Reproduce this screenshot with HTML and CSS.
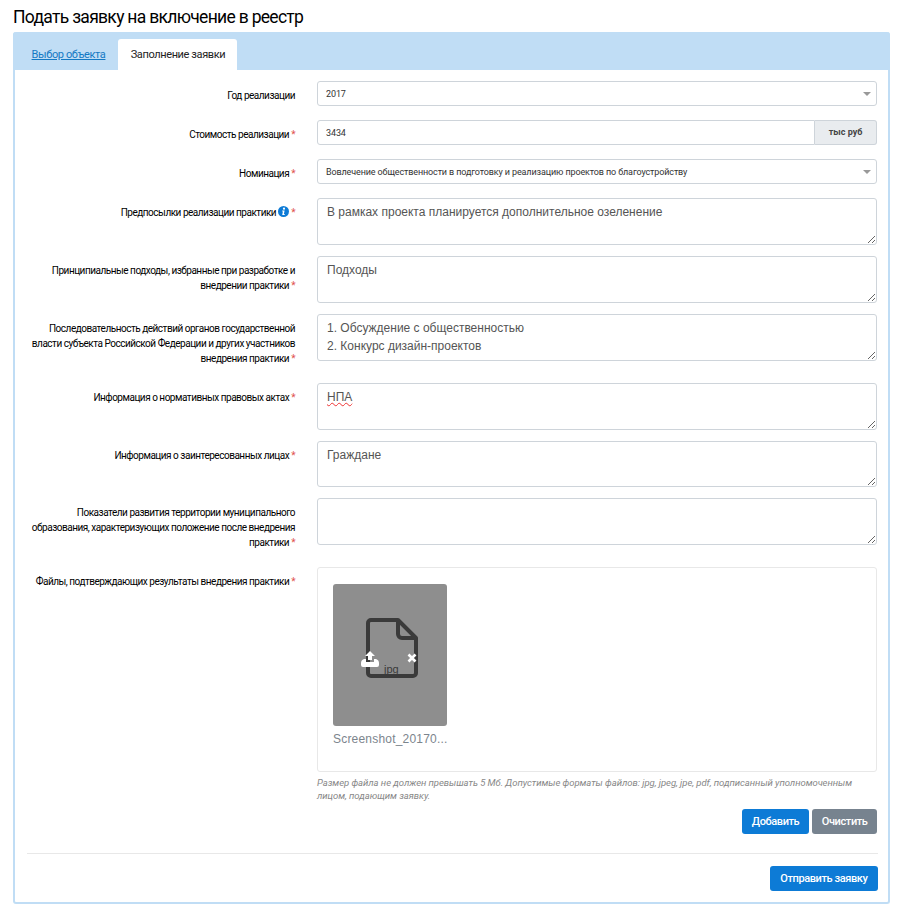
FILE: index.html
```html
<!doctype html>
<html lang="ru">
  <head>
    <meta charset="utf-8">
    <meta name="viewport" content="width=device-width, initial-scale=1">
    <title>Подать заявку на включение в реестр</title>
    <link rel="stylesheet" href="styles.css">
  </head>
  <body>
    <h1>Подать заявку на включение в реестр</h1>
    <div class="panel">
      <div class="tabs">
        <a class="tab" href="#">Выбор объекта</a>
        <span class="tab active">Заполнение заявки</span>
      </div>
      <form class="panel-body">
        <div class="row">
          <label class="row-label">Год реализации</label>
          <div class="row-field select-wrap">
            <select class="control"><option>2017</option></select>
          </div>
        </div>
        <div class="row">
          <label class="row-label">Стоимость реализации <span class="req">*</span></label>
          <div class="row-field input-group">
            <input class="control" type="text" value="3434">
            <span class="addon">тыс руб</span>
          </div>
        </div>
        <div class="row">
          <label class="row-label">Номинация <span class="req">*</span></label>
          <div class="row-field select-wrap">
            <select class="control"><option>Вовлечение общественности в подготовку и реализацию проектов по благоустройству</option></select>
          </div>
        </div>
        <div class="row">
          <label class="row-label">Предпосылки реализации практики
            <svg class="info" width="11" height="11" viewBox="0 0 11 11"><circle cx="5.5" cy="5.5" r="5.5" fill="#0d7bd6"/><circle cx="6" cy="2.7" r="1.1" fill="#fff"/><path d="M4.2 4.6h2.4L5.9 8.1h.8v.8H4.2l.7-3.5h-.7z" fill="#fff"/></svg>
            <span class="req">*</span></label>
          <div class="row-field"><textarea class="control" spellcheck="false">В рамках проекта планируется дополнительное озеленение</textarea></div>
        </div>
        <div class="row">
          <label class="row-label">Принципиальные подходы, избранные при разработке и внедрении практики <span class="req">*</span></label>
          <div class="row-field"><textarea class="control" spellcheck="false">Подходы</textarea></div>
        </div>
        <div class="row">
          <label class="row-label">Последовательность действий органов государственной власти субъекта Российской Федерации и других участников внедрения практики <span class="req">*</span></label>
          <div class="row-field"><textarea class="control" spellcheck="false">1. Обсуждение с общественностью
2. Конкурс дизайн-проектов</textarea></div>
        </div>
        <div class="row">
          <label class="row-label">Информация о нормативных правовых актах <span class="req">*</span></label>
          <div class="row-field"><textarea class="control misspelled" spellcheck="false">НПА</textarea></div>
        </div>
        <div class="row">
          <label class="row-label">Информация о заинтересованных лицах <span class="req">*</span></label>
          <div class="row-field"><textarea class="control control-short" spellcheck="false">Граждане</textarea></div>
        </div>
        <div class="row">
          <label class="row-label">Показатели развития территории муниципального образования, характеризующих положение после внедрения практики <span class="req">*</span></label>
          <div class="row-field"><textarea class="control" spellcheck="false"></textarea></div>
        </div>
        <div class="row row-files">
          <label class="row-label">Файлы, подтверждающих результаты внедрения практики <span class="req">*</span></label>
          <div class="row-field">
            <div class="file-box">
              <div class="file-item">
                <div class="file-thumb">
                  <svg class="file-icon" width="52" height="60" viewBox="0 0 52 60" fill="none" stroke="#3a3a3a" stroke-width="4" stroke-linejoin="round"><path d="M5 2h27l18 18v35a3 3 0 0 1-3 3H5a3 3 0 0 1-3-3V5a3 3 0 0 1 3-3z"/><path d="M32 2v14a4 4 0 0 0 4 4h14"/></svg>
                  <svg class="upload-icon" width="18" height="17" viewBox="0 0 18 17"><path fill="#fff" d="M9 1l5 5h-3v4H7V6H4z"/><path fill="#fff" d="M0 13q0-3 3-4h2v3h8V9h2q3 1 3 4v2q0 2-2 2H2q-2 0-2-2z"/></svg>
                  <svg class="remove-icon" width="10" height="10" viewBox="0 0 10 10"><path d="M1.5 1.5l7 7M8.5 1.5l-7 7" stroke="#fff" stroke-width="2.6"/></svg>
                  <span class="file-ext">jpg</span>
                </div>
                <div class="file-name">Screenshot_20170...</div>
              </div>
            </div>
            <p class="hint">Размер файла не должен превышать 5 Мб. Допустимые форматы файлов: jpg, jpeg, jpe, pdf, подписанный уполномоченным лицом, подающим заявку.</p>
            <div class="file-actions">
              <button type="button" class="btn btn-blue">Добавить</button>
              <button type="button" class="btn btn-gray">Очистить</button>
            </div>
          </div>
        </div>
        <div class="form-footer">
          <button type="button" class="btn btn-blue btn-send">Отправить заявку</button>
        </div>
      </form>
    </div>
  </body>
</html>
```
FILE: styles.css
```css
body {
  font-family: Roboto, "Liberation Sans", sans-serif;
  margin: 0;
  padding: 0;
  background-color: #fff;
  color: #111;
}

h1 {
  font-size: 17.5px;
  font-weight: 400;
  letter-spacing: -0.7px;
  line-height: 21px;
  margin: 7px 0 4px 13px;
  color: #000;
}

a {
  color: #1479c4;
}

.panel {
  margin: 0 13px;
  border: 2px solid #c0ddf5;
  border-top: 0;
  border-radius: 3px;
  background: #fff;
}

.tabs {
  display: flex;
  background: #c0ddf5;
  height: 38px;
  padding: 7px 0 0 5px;
  margin: 0 -2px;
  box-sizing: border-box;
  border-radius: 3px 3px 0 0;
}

.tab {
  box-sizing: border-box;
  width: 100px;
  padding: 9px 0 0 1px;
  font-size: 11px;
  letter-spacing: -0.38px;
  line-height: 14px;
  text-align: center;
}

.tab.active {
  width: 119px;
  background: #fff;
  color: #222;
  border-radius: 3px 3px 0 0;
}

.panel-body {
  padding: 11px 11px 11px 12px;
}

.row {
  display: flex;
  margin-bottom: 11px;
}

.row-files {
  margin-bottom: 19px;
}

.row-label {
  width: 268px;
  padding: 7px 0 6px;
  flex: none;
  text-align: right;
  font-size: 10px;
  letter-spacing: -0.48px;
  line-height: 15px;
  color: #000;
}

.req {
  color: #e0524d;
}

.info {
  vertical-align: -1px;
}

.row-field {
  flex: 1;
  margin-left: 22px;
  min-width: 0;
}

.control {
  display: block;
  width: 100%;
  height: 25px;
  box-sizing: border-box;
  border: 1px solid #ced4da;
  border-radius: 3px;
  background: #fff;
  padding: 0 8px;
  font-family: Roboto, sans-serif;
  font-size: 9px;
  letter-spacing: -0.12px;
  color: #333;
  outline: none;
}

select.control {
  appearance: none;
}

.select-wrap {
  position: relative;
}

.select-wrap::after {
  content: "";
  position: absolute;
  right: 6px;
  top: 11px;
  border-left: 4px solid transparent;
  border-right: 4px solid transparent;
  border-top: 4px solid #999;
  pointer-events: none;
}

.input-group {
  display: flex;
}

.input-group .control {
  border-radius: 3px 0 0 3px;
}

.addon {
  flex: none;
  width: 62px;
  height: 25px;
  box-sizing: border-box;
  border: 1px solid #ced4da;
  border-left: 0;
  border-radius: 0 3px 3px 0;
  background: #e9ecef;
  font-size: 9px;
  font-weight: 700;
  line-height: 23px;
  text-align: center;
  color: #444;
}

textarea.control {
  height: 47px;
  padding: 4px 9px;
  font-family: "Liberation Sans", Arial, sans-serif;
  font-size: 12px;
  letter-spacing: 0;
  line-height: 18px;
  color: #555;
  resize: vertical;
}

textarea.control-short {
  height: 46px;
}

.misspelled {
  text-decoration: underline wavy #e33;
  text-decoration-thickness: 1px;
  text-underline-offset: 1px;
}

.file-box {
  height: 205px;
  box-sizing: border-box;
  border: 1px solid #e8e8e8;
  border-radius: 3px;
  padding: 16px 15px;
}

.file-item {
  width: 114px;
}

.file-thumb {
  position: relative;
  height: 142px;
  background: #8e8e8e;
  border-radius: 3px;
}

.file-icon {
  position: absolute;
  left: 33px;
  top: 34px;
}

.upload-icon {
  position: absolute;
  left: 28px;
  top: 66px;
}

.remove-icon {
  position: absolute;
  left: 74px;
  top: 69px;
}

.file-ext {
  position: absolute;
  left: 51px;
  top: 79px;
  font-family: "Liberation Sans", Arial, sans-serif;
  font-size: 11px;
  line-height: 13px;
  color: #3a3a3a;
}

.file-name {
  margin-top: 6px;
  font-family: "Liberation Sans", Arial, sans-serif;
  font-size: 12px;
  letter-spacing: 0.2px;
  line-height: 14px;
  color: #7c858d;
  white-space: nowrap;
}

.hint {
  margin: 4px 0 0;
  font-size: 9.5px;
  font-style: italic;
  letter-spacing: -0.04px;
  line-height: 13px;
  color: #888;
}

.file-actions {
  display: flex;
  justify-content: flex-end;
  gap: 3px;
  margin-top: 7px;
}

.btn {
  height: 25px;
  padding: 0 10px;
  border: 0;
  border-radius: 3px;
  font-family: Roboto, sans-serif;
  font-size: 11px;
  font-weight: 500;
  letter-spacing: -0.4px;
  color: #fff;
  cursor: pointer;
}

.btn-blue {
  background: #0d7bd6;
}

.btn-gray {
  padding: 0 9.5px;
  background: #77838f;
}

.btn-send {
  padding: 0 10.5px;
}

.form-footer {
  display: flex;
  justify-content: flex-end;
  border-top: 1px solid #e8e8e8;
  padding-top: 12px;
  margin-right: -1px;
}
```
